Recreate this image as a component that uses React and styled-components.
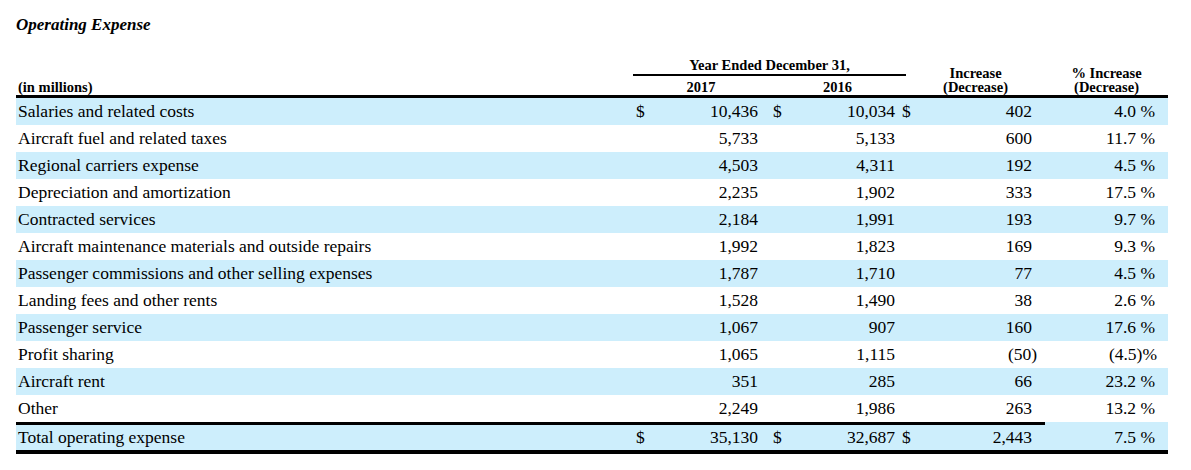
import styled, { createGlobalStyle } from "styled-components";

const GlobalStyle = createGlobalStyle`
  html, body {
    margin: 0;
    background: #fff;
  }
  body {
    font-family: "Liberation Serif", "Times New Roman", serif;
    color: #000;
  }
`;

const STRIPE = "#cdeefc";

// ── Data ─────────────────────────────────────────────────────────────────────
const ROWS = [
  { label: "Salaries and related costs", y17: "10,436", y16: "10,034", inc: "402", pct: "4.0 %", dollar: true },
  { label: "Aircraft fuel and related taxes", y17: "5,733", y16: "5,133", inc: "600", pct: "11.7 %" },
  { label: "Regional carriers expense", y17: "4,503", y16: "4,311", inc: "192", pct: "4.5 %" },
  { label: "Depreciation and amortization", y17: "2,235", y16: "1,902", inc: "333", pct: "17.5 %" },
  { label: "Contracted services", y17: "2,184", y16: "1,991", inc: "193", pct: "9.7 %" },
  { label: "Aircraft maintenance materials and outside repairs", y17: "1,992", y16: "1,823", inc: "169", pct: "9.3 %" },
  { label: "Passenger commissions and other selling expenses", y17: "1,787", y16: "1,710", inc: "77", pct: "4.5 %" },
  { label: "Landing fees and other rents", y17: "1,528", y16: "1,490", inc: "38", pct: "2.6 %" },
  { label: "Passenger service", y17: "1,067", y16: "907", inc: "160", pct: "17.6 %" },
  { label: "Profit sharing", y17: "1,065", y16: "1,115", inc: "(50)", pct: "(4.5)%", neg: true },
  { label: "Aircraft rent", y17: "351", y16: "285", inc: "66", pct: "23.2 %" },
  { label: "Other", y17: "2,249", y16: "1,986", inc: "263", pct: "13.2 %" },
];

const TOTAL = { label: "Total operating expense", y17: "35,130", y16: "32,687", inc: "2,443", pct: "7.5 %" };

// ── Layout ───────────────────────────────────────────────────────────────────
const Page = styled.div`
  padding: 15px 0 0 16px;
`;

const Title = styled.h2`
  margin: 0;
  font-size: 17px;
  line-height: 20px;
  font-weight: 700;
  font-style: italic;
`;

const Table = styled.table`
  margin-top: 22px;
  width: 1152px;
  table-layout: fixed;
  border-collapse: separate;
  border-spacing: 0;
`;

// ── Header ───────────────────────────────────────────────────────────────────
const Head = styled.th`
  padding: 0;
  font-size: 14.5px;
  font-weight: 700;
  white-space: nowrap;
  vertical-align: bottom;
  text-align: ${({ $align }) => $align || "center"};
  line-height: ${({ $stack }) => ($stack ? "14px" : "16px")};
  padding-top: ${({ $low }) => ($low ? "3px" : "0")};
  padding-bottom: ${({ $stack }) => ($stack ? "1px" : "0")};
  padding-left: ${({ $pl }) => $pl || 0}px;
  padding-right: ${({ $pr }) => $pr || 0}px;
  border-bottom: ${({ $rule }) => ($rule ? "3px solid #000" : "none")};
`;

const YearRule = styled.div`
  margin: 0 9px 0 5px;
  line-height: 16px;
  padding-bottom: 1px;
  border-bottom: 2px solid #000;
`;

// ── Body ─────────────────────────────────────────────────────────────────────
const Row = styled.tr`
  background: ${({ $striped }) => ($striped ? STRIPE : "transparent")};
`;

const Cell = styled.td`
  padding: 0;
  font-size: 17.5px;
  white-space: nowrap;
  line-height: ${({ $total }) => ($total ? "25px" : "27px")};
  text-align: ${({ $align }) => $align || "right"};
  padding-left: ${({ $pl }) => $pl || 0}px;
  padding-right: ${({ $pr }) => $pr || 0}px;
  background-clip: padding-box;
  border-top: ${({ $top }) => $top || "none"};
  border-bottom: ${({ $bottom }) => $bottom || "none"};
`;

function BodyRow({ row, striped, total }) {
  const showDollar = row.dollar || total;
  const top = total ? "3px solid #000" : undefined;
  const bottom = total ? "4px solid #000" : undefined;
  return (
    <Row $striped={striped}>
      <Cell $align="left" $pl={2} $total={total} $top={top} $bottom={bottom}>
        {row.label}
      </Cell>
      <Cell $align="left" $pl={8} $total={total} $top={top} $bottom={bottom}>
        {showDollar ? "$" : ""}
      </Cell>
      <Cell $pr={10} $total={total} $top={top} $bottom={bottom}>{row.y17}</Cell>
      <Cell $align="left" $pl={5} $total={total} $top={top} $bottom={bottom}>
        {showDollar ? "$" : ""}
      </Cell>
      <Cell $pr={5} $total={total} $top={top} $bottom={bottom}>{row.y16}</Cell>
      <Cell $align="left" $pl={2} $total={total} $top={top} $bottom={bottom}>
        {showDollar ? "$" : ""}
      </Cell>
      <Cell $pr={row.neg ? 8 : 13} $total={total} $top={top} $bottom={bottom}>{row.inc}</Cell>
      <Cell
        $pr={row.neg ? 11 : 13}
        $total={total}
        $top={total ? "3px solid transparent" : undefined}
        $bottom={bottom}
      >
        {row.pct}
      </Cell>
    </Row>
  );
}

export default function App() {
  return (
    <>
      <GlobalStyle />
      <Page>
        <Title>Operating Expense</Title>
        <Table>
          <colgroup>
            <col style={{ width: 612 }} />
            <col style={{ width: 22 }} />
            <col style={{ width: 118 }} />
            <col style={{ width: 14 }} />
            <col style={{ width: 118 }} />
            <col style={{ width: 15 }} />
            <col style={{ width: 130 }} />
            <col style={{ width: 123 }} />
          </colgroup>
          <thead>
            <tr>
              <Head />
              <Head colSpan={5}>
                <YearRule>Year Ended December 31,</YearRule>
              </Head>
              <Head rowSpan={2} $stack $rule $pr={9}>
                Increase
                <br />
                (Decrease)
              </Head>
              <Head rowSpan={2} $stack $rule>
                % Increase
                <br />
                (Decrease)
              </Head>
            </tr>
            <tr>
              <Head $align="left" $pl={2} $low $rule>
                (in millions)
              </Head>
              <Head colSpan={2} $pl={6} $low $rule>
                2017
              </Head>
              <Head colSpan={2} $pl={7} $low $rule>
                2016
              </Head>
              <Head $low $rule />
            </tr>
          </thead>
          <tbody>
            {ROWS.map((row, i) => (
              <BodyRow key={row.label} row={row} striped={i % 2 === 0} />
            ))}
            <BodyRow row={TOTAL} striped total />
          </tbody>
        </Table>
      </Page>
    </>
  );
}
